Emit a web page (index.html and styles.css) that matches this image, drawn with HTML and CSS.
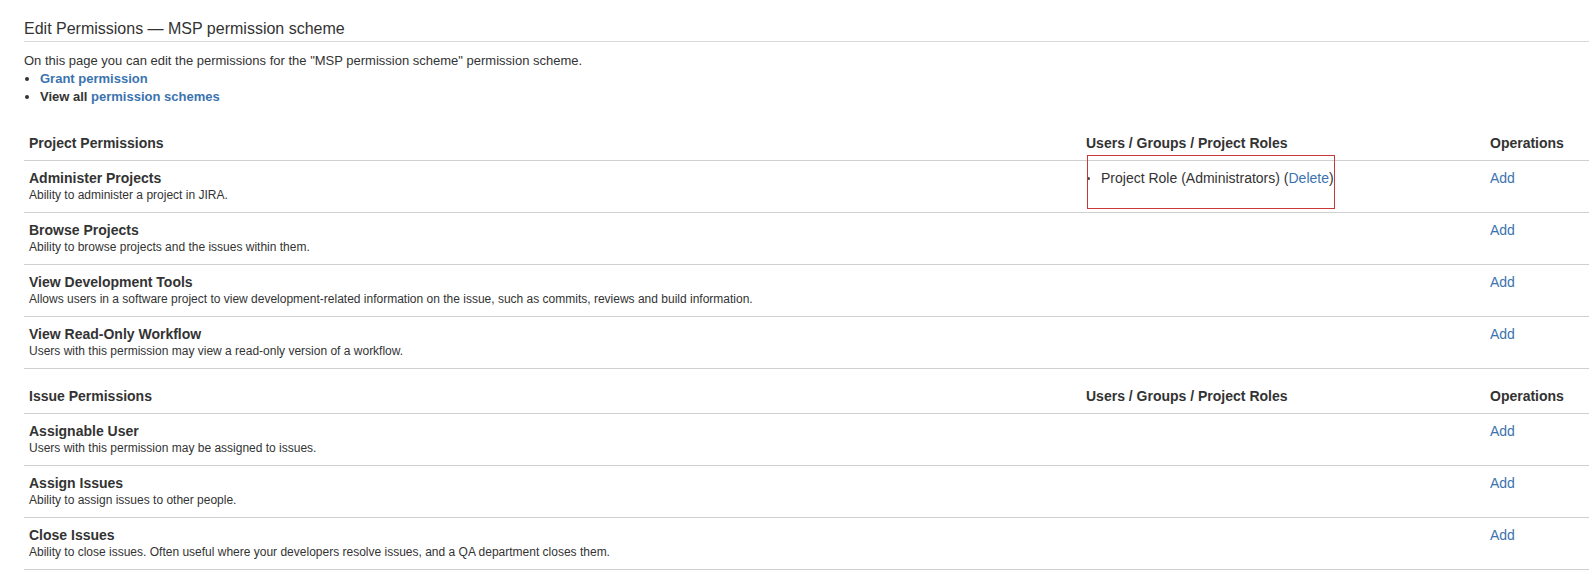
FILE: index.html
```html
<!DOCTYPE html>
<html lang="en">
<head>
  <meta charset="UTF-8">
  <title>Edit Permissions — MSP permission scheme</title>
  <link rel="stylesheet" href="styles.css">
</head>
<body>

<div class="page">
  <h2 class="page-title">Edit Permissions — MSP permission scheme</h2>

  <p class="intro">On this page you can edit the permissions for the "MSP permission scheme" permission scheme.</p>
  <ul class="actions">
    <li><a href="#">Grant permission</a></li>
    <li>View all <a href="#">permission schemes</a></li>
  </ul>

  <table class="perms">
    <colgroup>
      <col class="col-name">
      <col class="col-users">
      <col class="col-ops">
    </colgroup>

    <!-- Project permissions -->
    <tr>
      <th>Project Permissions</th>
      <th>Users / Groups / Project Roles</th>
      <th>Operations</th>
    </tr>
    <tr>
      <td>
        <div class="perm-name">Administer Projects</div>
        <div class="perm-desc">Ability to administer a project in JIRA.</div>
      </td>
      <td class="users">
        <ul class="holders">
          <li>Project Role (Administrators) (<a href="#">Delete</a>)</li>
        </ul>
        <div class="highlight"></div>
      </td>
      <td><a href="#">Add</a></td>
    </tr>
    <tr>
      <td>
        <div class="perm-name">Browse Projects</div>
        <div class="perm-desc">Ability to browse projects and the issues within them.</div>
      </td>
      <td></td>
      <td><a href="#">Add</a></td>
    </tr>
    <tr>
      <td>
        <div class="perm-name">View Development Tools</div>
        <div class="perm-desc">Allows users in a software project to view development-related information on the issue, such as commits, reviews and build information.</div>
      </td>
      <td></td>
      <td><a href="#">Add</a></td>
    </tr>
    <tr>
      <td>
        <div class="perm-name">View Read-Only Workflow</div>
        <div class="perm-desc">Users with this permission may view a read-only version of a workflow.</div>
      </td>
      <td></td>
      <td><a href="#">Add</a></td>
    </tr>

    <!-- Issue permissions -->
    <tr>
      <th>Issue Permissions</th>
      <th>Users / Groups / Project Roles</th>
      <th>Operations</th>
    </tr>
    <tr>
      <td>
        <div class="perm-name">Assignable User</div>
        <div class="perm-desc">Users with this permission may be assigned to issues.</div>
      </td>
      <td></td>
      <td><a href="#">Add</a></td>
    </tr>
    <tr>
      <td>
        <div class="perm-name">Assign Issues</div>
        <div class="perm-desc">Ability to assign issues to other people.</div>
      </td>
      <td></td>
      <td><a href="#">Add</a></td>
    </tr>
    <tr>
      <td>
        <div class="perm-name">Close Issues</div>
        <div class="perm-desc">Ability to close issues. Often useful where your developers resolve issues, and a QA department closes them.</div>
      </td>
      <td></td>
      <td><a href="#">Add</a></td>
    </tr>
  </table>
</div>

</body>
</html>
```

FILE: styles.css
```css
body {
  margin: 0;
  font-family: 'Liberation Sans', Arial, sans-serif;
  color: #333;
  background: #fff;
}
a {
  color: #3b73af;
  text-decoration: none;
}
.page {
  padding: 19px 0 0 24px;
}
.page-title {
  margin: 0;
  font-size: 16px;
  font-weight: normal;
  line-height: 20px;
  padding-bottom: 2px;
  border-bottom: 1px solid #d9d9d9;
}
.intro {
  margin: 10px 0 0;
  font-size: 13px;
  line-height: 18px;
}
.actions {
  margin: 0;
  padding-left: 16px;
  font-size: 13px;
  line-height: 18px;
  font-weight: bold;
}
.perms {
  width: 100%;
  margin-top: 10px;
  border-collapse: collapse;
  table-layout: fixed;
}
.col-name {
  width: 1057px;
}
.col-users {
  width: 404px;
}
.col-ops {
  width: 104px;
}
th {
  text-align: left;
  font-size: 14px;
  line-height: 18px;
  padding: 18px 5px 8px;
  border-bottom: 1px solid #d0d0d0;
}
td {
  vertical-align: top;
  font-size: 14px;
  line-height: 18px;
  padding: 8px 5px 9px;
  border-bottom: 1px solid #d0d0d0;
}
.perm-name {
  font-weight: bold;
}
.perm-desc {
  font-size: 12px;
  line-height: 16px;
}
.users {
  position: relative;
}
.holders {
  list-style: none;
  margin: 0;
  padding: 0;
}
.holders li {
  display: flex;
  align-items: center;
}
.holders li::before {
  content: "";
  width: 3px;
  height: 3px;
  border-radius: 50%;
  background: #444;
  margin: 0 11px 0 1px;
}
.highlight {
  position: absolute;
  left: 6px;
  top: -6px;
  width: 246px;
  height: 52px;
  border: 1px solid #c8373c;
}
```
